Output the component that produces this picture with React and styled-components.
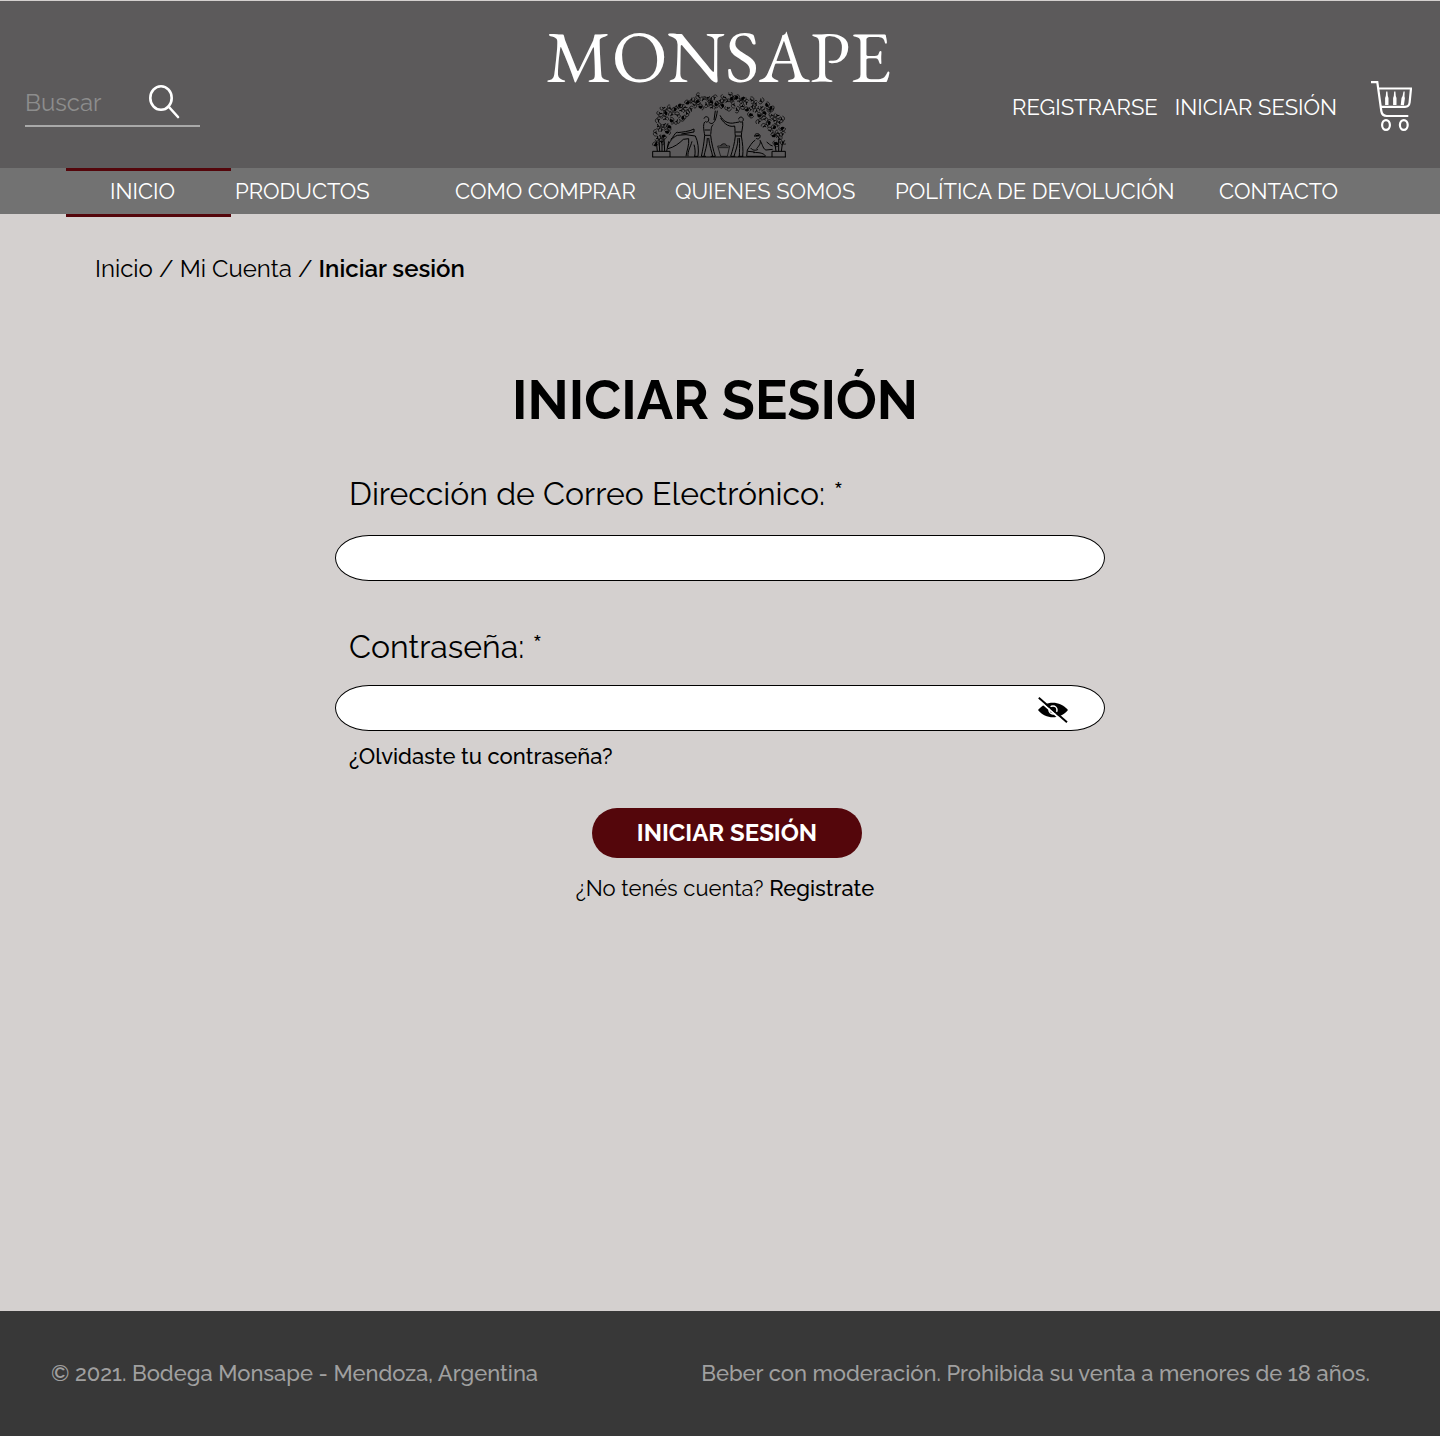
import React, { useState } from "react";
import styled, { createGlobalStyle } from "styled-components";

const GlobalStyle = createGlobalStyle`
  *, *::before, *::after { box-sizing: border-box; }
  body {
    margin: 0;
    background: #d4d0cf;
    color: #000;
    font-family: Raleway, Lato, "Open Sans", sans-serif;
    font-variant-numeric: oldstyle-nums;
  }
  a { color: inherit; text-decoration: none; }
  button, input { font-family: inherit; }
`;

const Page = styled.div`
  min-height: 100vh;
  display: flex;
  flex-direction: column;
`;

const Header = styled.header`
  display: grid;
  grid-template-columns: 1fr auto 1fr;
  align-items: end;
  padding: 27px 28px 10px 25px;
  border-top: 1px solid #d4d0cf;
  background: #5c5a5b;
  color: #fff;
`;

const Search = styled.form`
  display: flex;
  align-items: center;
  justify-content: space-between;
  width: 175px;
  margin-bottom: 31px;
  padding: 0 20px 5px 0;
  border-bottom: 2px solid #a9a9a9;
`;

const SearchInput = styled.input`
  width: 110px;
  padding: 3px 0 0;
  border: 0;
  outline: 0;
  background: transparent;
  color: #fff;
  font-size: 24px;
  line-height: 34px;
  &::placeholder { color: #8d8d8d; opacity: 1; }
`;

const IconButton = styled.button`
  display: flex;
  padding: 0;
  border: 0;
  background: transparent;
  color: inherit;
  cursor: pointer;
`;

const RevealButton = styled(IconButton)`
  padding-top: 3px;
`;

const Brand = styled.a`
  display: flex;
  flex-direction: column;
  align-items: center;
  gap: 8px;
  color: #000;
`;

const BrandName = styled.span`
  color: #fff;
  font-family: "EB Garamond", "Liberation Serif", serif;
  font-size: 73px;
  font-weight: 400;
  line-height: 56px;
`;

const Account = styled.div`
  display: flex;
  align-items: center;
  justify-content: flex-end;
  margin-bottom: 27px;
  font-size: 22px;
  line-height: 26px;
  gap: 17px;
`;

const AccountLink = styled.a`
  padding-top: 2px;
`;

const CartLink = styled.a`
  display: flex;
  margin-left: 17px;
`;

const Nav = styled.nav`
  display: grid;
  grid-template-columns: 165fr 224fr 220fr 220fr 324fr 155fr;
  height: 46px;
  padding: 0 66px;
  background: #727272;
  color: #fff;
  font-size: 22px;
  line-height: 40px;
`;

const NavLink = styled.a`
  height: ${(p) => (p.$active ? "49px" : "46px")};
  padding-left: ${(p) => (p.$active ? "44px" : p.$tight ? "4px" : "0")};
  border: solid ${(p) => (p.$active ? "#54060b" : "transparent")};
  border-width: 3px 0;
  white-space: nowrap;
`;

const Main = styled.main`
  flex: 1;
  padding: 39px 95px;
`;

const Breadcrumb = styled.nav`
  font-size: 24px;
  line-height: 32px;
  b { font-weight: 600; }
`;

const LoginForm = styled.form`
  display: flex;
  flex-direction: column;
  width: 100%;
  max-width: 770px;
  margin: 80px auto 0;
`;

const Title = styled.h1`
  margin: 0 10px 35px 0;
  font-size: 54px;
  line-height: 70px;
  font-weight: 700;
  text-align: center;
`;

const Label = styled.label`
  padding-left: 14px;
  font-size: 32px;
  line-height: 48px;
`;

const Field = styled.div`
  display: flex;
  align-items: center;
  height: 46px;
  margin: ${(p) => (p.$last ? "14px 0 9px" : "17px 0 42px")};
  padding: 0 36px;
  border: 1px solid #000;
  border-radius: 34px / 23px;
  background: #fff;
`;

const FieldInput = styled.input`
  flex: 1;
  min-width: 0;
  border: 0;
  outline: 0;
  background: transparent;
  font-size: 22px;
`;

const ForgotLink = styled.a`
  align-self: flex-start;
  padding-left: 14px;
  font-size: 22px;
  line-height: 32px;
  font-weight: 500;
`;

const Actions = styled.div`
  display: flex;
  flex-direction: column;
  align-items: center;
  gap: 14px;
  margin-top: 36px;
  padding-left: 14px;
`;

const Submit = styled.button`
  width: 270px;
  height: 50px;
  padding: 0 0 2px;
  border: 0;
  border-radius: 25px;
  background: #54060b;
  color: #fff;
  font-size: 24px;
  font-weight: 700;
  cursor: pointer;
`;

const SignUp = styled.p`
  margin: 0;
  padding-right: 4px;
  font-size: 22px;
  line-height: 32px;
  a { font-weight: 500; }
`;

const Footer = styled.footer`
  display: flex;
  align-items: center;
  justify-content: space-between;
  height: 125px;
  padding: 0 70px 2px 51px;
  background: #383838;
  color: #a0a0a0;
  font-size: 22px;
  font-weight: 500;
`;

function SearchIcon() {
  return (
    <svg width="31" height="34" viewBox="0 0 31 34" fill="none" stroke="currentColor" strokeWidth="2.6" aria-hidden="true">
      <ellipse cx="12" cy="13" rx="10.7" ry="11.7" />
      <path d="M19.500 21.500 29 32" strokeLinecap="round" />
    </svg>
  );
}

function CartIcon() {
  return (
    <svg width="41" height="50" viewBox="0 0 41 50" fill="none" stroke="currentColor" strokeWidth="2.2" aria-hidden="true">
      <path d="M0 1.200h6.300l4 28.800c.6 4 2.300 5 5.500 5h21.500" />
      <path d="M7.500 7.500H40l-1.400 14c-.4 3.300-1.600 4.300-4.600 4.300H10" />
      <ellipse cx="15" cy="44" rx="3.900" ry="4.900" />
      <ellipse cx="32.800" cy="44" rx="3.900" ry="4.900" />
      <g fill="currentColor" stroke="none">
        <path d="M15.200 10.500h1.200l.4 4.500.7 2v7h-3.400v-7l.7-2z" />
        <path d="M23.200 10.500h1.200l.4 4.500.7 2v7h-3.400v-7l.7-2z" />
        <path d="m32.500 10.500 1.200.1-.2 4.700.4 2-1 6.900-3.200-.3.800-7 1.100-1.900z" />
      </g>
    </svg>
  );
}

function HiddenEyeIcon() {
  return (
    <svg width="30" height="26" viewBox="0 0 30 26" aria-hidden="true">
      <path d="M0 13C7 4 21 2.500 30 13 22 22.500 8 23 0 13Z" fill="#000" />
      <circle cx="15" cy="13" r="4" fill="none" stroke="#fff" strokeWidth="1.500" />
      <path d="M0 2.500 28 27" stroke="#fff" strokeWidth="2" />
      <path d="M.8.8 29 25.300" stroke="#000" strokeWidth="1.900" />
    </svg>
  );
}

/* Centres of the leaves that make up the vine arch. */
const LEAVES = [
  [34, 168], [50, 160], [38, 148], [56, 142], [34, 132], [52, 124], [68, 131], [40, 112],
  [58, 108], [74, 114], [42, 94], [62, 91], [80, 97], [96, 98], [46, 74], [64, 73],
  [82, 78], [98, 80], [114, 88], [56, 58], [76, 58], [92, 62], [110, 66], [126, 74],
  [104, 50], [122, 55], [140, 62], [130, 43], [148, 49], [140, 33], [158, 38], [162, 22],
  [176, 32], [168, 56], [184, 47], [190, 27], [200, 39], [210, 28], [202, 57], [214, 48],
  [226, 36], [238, 25], [234, 50], [248, 38], [256, 19], [260, 31], [250, 58], [268, 48],
  [276, 27], [284, 38], [276, 63], [294, 29], [294, 52], [306, 42], [308, 64], [320, 35],
  [322, 54], [318, 78], [334, 45], [336, 67], [344, 82], [348, 36], [350, 56], [360, 72],
  [344, 99], [360, 92], [366, 50], [376, 62], [382, 80], [374, 102], [360, 113], [388, 96],
  [378, 58], [398, 80], [404, 101], [390, 116], [376, 126], [410, 92], [412, 119], [400, 133],
  [414, 137], [388, 142], [404, 151], [416, 160], [394, 164],
];

function Leaf({ x, y, turn, grape }) {
  return (
    <g transform={`translate(${x} ${y}) rotate(${turn})`}>
      <path d="M-10 2C-12-6-4-11 1-6 6-10 12-3 8 2" />
      <path d="M-5 4c2-4 5-5 9-3M1-5l-2 5" strokeWidth={grape ? 7 : 3} />
    </g>
  );
}

function VineyardArt() {
  return (
    <svg width="135" height="66" viewBox="19 10 405 198" fill="none" stroke="currentColor" strokeWidth="2" aria-hidden="true">
      {LEAVES.map(([x, y], i) => (
        <Leaf key={i} x={x} y={y} turn={(i * 67) % 360} grape={i % 3 === 0} />
      ))}
      <path d="M24 205H424M24 206V188H76V205M382 205V188H422V205" strokeWidth="3" />
      <path d="M38 188 35 158M45 188 43 150M52 188V152M60 188 58 150M66 188 72 158M394 188 390 160M402 188V150M410 188 414 158" strokeWidth="3" />
      {/* stooping picker */}
      <path d="M68 178C74 158 84 146 98 140L124 138 152 142M98 132C112 130 134 129 148 121V130L110 136M78 152C86 148 88 134 98 130M70 180C88 176 104 164 116 152L132 150M152 142C160 158 163 182 160 203H148M132 150C134 170 126 186 124 203M142 158C138 174 128 188 130 203M148 168C152 180 152 194 150 203" strokeWidth="3" />
      {/* standing pickers under the arch */}
      <path d="M178 90C180 82 190 82 192 90 194 98 186 104 182 98M180 100C174 110 178 126 180 140M192 100C204 112 214 100 218 66M206 108C198 112 200 126 198 138M212 66 208 94M180 140C178 164 174 186 170 203M180 140H198C200 160 206 186 212 203M188 148C188 172 180 188 178 203M192 148C194 172 202 190 204 203M170 203H184M198 203H212M180 124H196" strokeWidth="3" />
      <path d="M282 92C282 84 294 82 296 92 296 100 286 104 284 96M226 80C234 96 250 108 272 102L284 100M228 88C240 108 256 116 270 112M294 100C296 114 290 128 290 142M270 112C272 124 270 132 272 142H290M272 142C270 164 264 184 258 203M290 142C294 164 296 184 294 203M280 148C280 170 272 188 268 203M284 148C286 172 284 190 284 203M258 203H272M280 203H296M272 130H290" strokeWidth="3" />
      {/* basket */}
      <path d="M219 172H255L248 203H228ZM222 177H252" />
      <path d="M228 171C232 164 244 164 246 171" strokeWidth="3" />
      {/* kneeling picker */}
      <path d="M330 144C328 134 342 132 346 140 348 150 338 154 334 148M332 154C322 160 316 172 308 184L306 203H362C362 196 346 190 326 192M346 154C350 164 342 172 336 180M348 158C354 170 356 182 364 184L384 182M318 178C324 186 334 186 340 182M310 188 330 190M366 160C372 164 376 170 384 172" strokeWidth="3" />
      <path d="M332 142 344 140" strokeWidth="5" />
    </svg>
  );
}

const NAV_ITEMS = [
  { label: "INICIO", active: true },
  { label: "PRODUCTOS", tight: true },
  { label: "COMO COMPRAR" },
  { label: "QUIENES SOMOS" },
  { label: "POLÍTICA DE DEVOLUCIÓN" },
  { label: "CONTACTO" },
];

export default function App() {
  const [visible, setVisible] = useState(false);
  return (
    <>
      <GlobalStyle />
      <Page>
        <Header>
          <Search role="search" onSubmit={(e) => e.preventDefault()}>
            <SearchInput type="search" placeholder="Buscar" aria-label="Buscar" />
            <IconButton type="submit" aria-label="Buscar"><SearchIcon /></IconButton>
          </Search>
          <Brand href="#">
            <BrandName>MONSAPE</BrandName>
            <VineyardArt />
          </Brand>
          <Account>
            <AccountLink href="#registro">REGISTRARSE</AccountLink>
            <AccountLink href="#sesion">INICIAR SESIÓN</AccountLink>
            <CartLink href="#carrito" aria-label="Carrito"><CartIcon /></CartLink>
          </Account>
        </Header>
        <Nav aria-label="Principal">
          {NAV_ITEMS.map((item) => (
            <NavLink key={item.label} href="#" $active={item.active} $tight={item.tight}>
              {item.label}
            </NavLink>
          ))}
        </Nav>
        <Main>
          <Breadcrumb aria-label="Ruta">
            <a href="#">Inicio</a> / <a href="#cuenta">Mi Cuenta</a> / <b>Iniciar sesión</b>
          </Breadcrumb>
          <LoginForm onSubmit={(e) => e.preventDefault()}>
            <Title>INICIAR SESIÓN</Title>
            <Label htmlFor="email">Dirección de Correo Electrónico: *</Label>
            <Field>
              <FieldInput id="email" type="email" />
            </Field>
            <Label htmlFor="password">Contraseña: *</Label>
            <Field $last>
              <FieldInput id="password" type={visible ? "text" : "password"} />
              <RevealButton type="button" aria-label="Mostrar contraseña" onClick={() => setVisible(!visible)}>
                <HiddenEyeIcon />
              </RevealButton>
            </Field>
            <ForgotLink href="#recuperar">¿Olvidaste tu contraseña?</ForgotLink>
            <Actions>
              <Submit type="submit">INICIAR SESIÓN</Submit>
              <SignUp>¿No tenés cuenta? <a href="#registro">Registrate</a></SignUp>
            </Actions>
          </LoginForm>
        </Main>
        <Footer>
          <span>© 2021. Bodega Monsape - Mendoza, Argentina</span>
          <span>Beber con moderación. Prohibida su venta a menores de 18 años.</span>
        </Footer>
      </Page>
    </>
  );
}
